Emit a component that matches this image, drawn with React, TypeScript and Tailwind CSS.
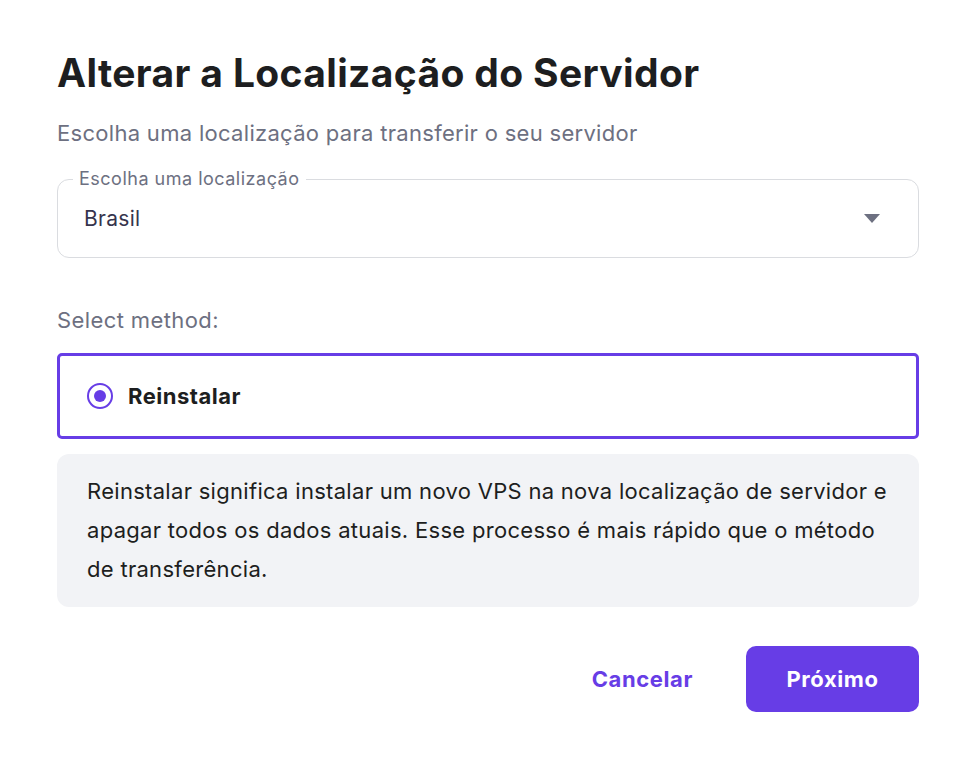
export default function App() {
  return (
    <div className="min-h-screen w-full bg-white font-['Inter',sans-serif] text-[#1d1e20]">
      <div className="px-[57px] pt-[50px] w-[976px]">
        <h1 className="text-[39px] leading-[46px] font-bold tracking-[0.35px]">
          Alterar a Localização do Servidor
        </h1>
        <p className="mt-[22px] text-[22px] leading-[30px] tracking-[0.3px] text-[#6d7081]">
          Escolha uma localização para transferir o seu servidor
        </p>

        {/* location select */}
        <div className="relative mt-[31px] h-[79px] rounded-[12px] border border-[#dadce0] flex items-center px-[26px]">
          <span className="absolute -top-[13px] left-[15px] bg-white px-[6px] text-[18px] leading-[24px] tracking-[0.5px] text-[#6d7081]">
            Escolha uma localização
          </span>
          <span className="text-[21px] tracking-[0.3px] text-[#36344d]">Brasil</span>
          <svg className="ml-auto mr-[12px]" width="16" height="9" viewBox="0 0 16 9">
            <path d="M0 0 L16 0 L8 9 Z" fill="#6d7081" />
          </svg>
        </div>

        <p className="mt-[47px] text-[22px] leading-[30px] tracking-[0.4px] text-[#6d7081]">Select method:</p>

        {/* method card */}
        <div className="mt-[18px] h-[86px] rounded-[5px] border-[3px] border-[#673de6] flex items-center px-[27px] gap-[15px]">
          <span className="w-[26px] h-[26px] rounded-full border-2 border-[#673de6] flex items-center justify-center">
            <span className="w-[12px] h-[12px] rounded-full bg-[#673de6]" />
          </span>
          <span className="text-[22px] font-bold tracking-[0.5px] text-[#1d1e20]">Reinstalar</span>
        </div>

        <div className="mt-[15px] rounded-[12px] bg-[#f2f3f6] px-[30px] pt-[18px] pb-[18px] text-[22px] leading-[39px] tracking-[0.3px] text-[#1d1e20]">
          <p>
            Reinstalar significa instalar um novo VPS na nova localização de servidor e
            <br />
            apagar todos os dados atuais. Esse processo é mais rápido que o método
            <br />
            de transferência.
          </p>
        </div>

        <div className="mt-[39px] flex items-center justify-end gap-[25px]">
          <button className="px-[28px] h-[66px] text-[22px] font-bold tracking-[0.6px] text-[#673de6]">Cancelar</button>
          <button className="h-[66px] w-[173px] rounded-[10px] bg-[#673de6] text-[22px] font-bold tracking-[0.6px] text-white">
            Próximo
          </button>
        </div>
      </div>
    </div>
  );
}
